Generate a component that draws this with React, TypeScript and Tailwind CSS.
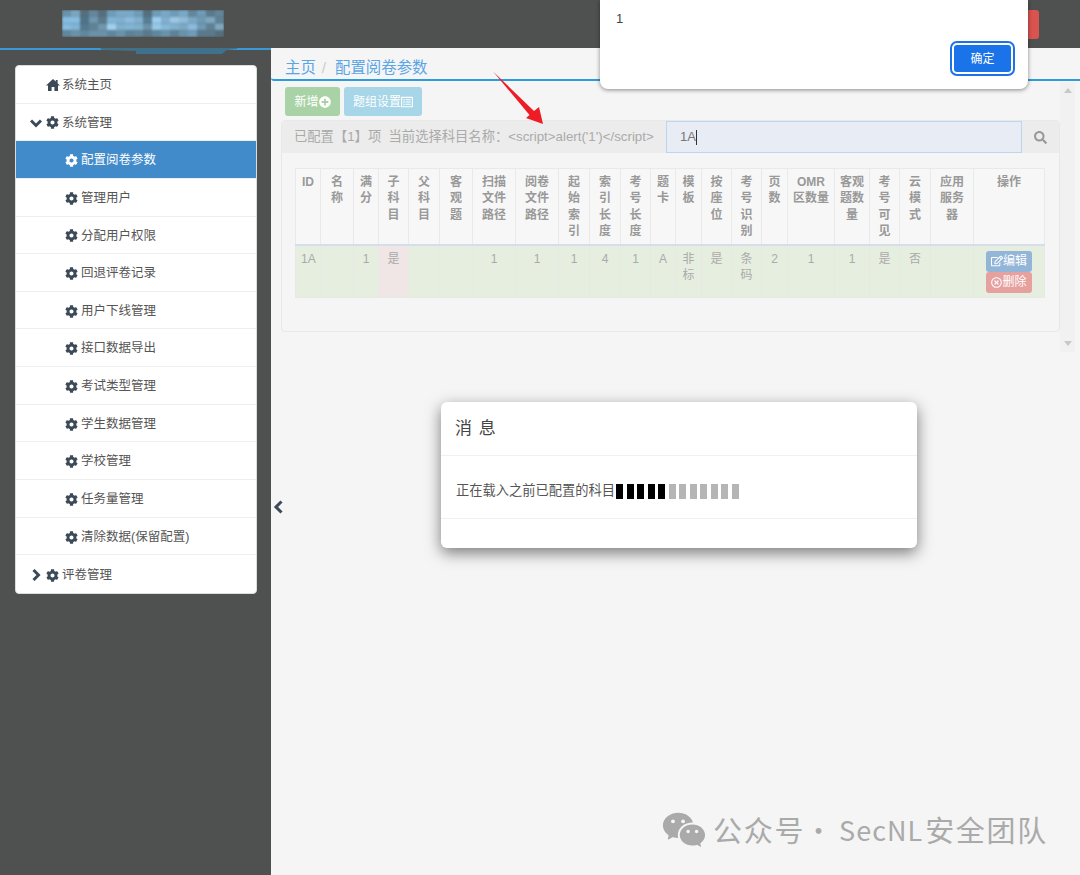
import React from "react";
import { FaCog, FaPlusCircle, FaRegListAlt, FaRegEdit, FaRegTimesCircle, FaSearch } from "react-icons/fa";
import { RiWechatFill } from "react-icons/ri";

const font = { fontFamily: '"Liberation Sans","Noto Sans CJK SC",sans-serif' };
const subItems = ["配置阅卷参数", "管理用户", "分配用户权限", "回退评卷记录", "用户下线管理", "接口数据导出", "考试类型管理", "学生数据管理", "学校管理", "任务量管理", "清除数据(保留配置)"];
const widths = [25, 33, 25, 30, 31, 33, 43, 43, 31, 31, 30, 25, 26, 30, 30, 26, 47, 35, 30, 31, 43, 71];
const heads = ["ID", "名称", "满分", "子科目", "父科目", "客观题", "扫描文件路径", "阅卷文件路径", "起始索引", "索引长度", "考号长度", "题卡", "模板", "按座位", "考号识别", "页数", "OMR区数量", "客观题数量", "考号可见", "云模式", "应用服务器", "操作"];
const cells = ["1A", "", "1", "是", "", "", "1", "1", "1", "4", "1", "A", "非标", "是", "条码", "2", "1", "1", "是", "否", "", ""];
const logo = [
  ["#6a93ab", "#7aa6c2", "#566f7f", "#62879c", "#566f7f", "#6f9cb8", "#7aa9c8", "#7aa9c8", "#6f9cb8", "#566f7f", "#6f9cb8", "#7aa9c8", "#6f9cb8", "#7aa9c8", "#62879c", "#6f9cb8", "#5a7a8c", "#62879c"],
  ["#85bce0", "#86bde0", "#4f7488", "#6f97ae", "#5a7a8c", "#80b5d5", "#7fb0cf", "#8abade", "#80b0cf", "#567e94", "#9ccdee", "#7fb0d0", "#9cc6e4", "#8fbcdb", "#7ca8c4", "#6e9ab4", "#7fa8c0", "#5f8296"],
  ["#85bce0", "#7fb4d6", "#527a90", "#5f8296", "#6f97ae", "#a0d0ef", "#7fb0cf", "#80b5d5", "#7fb0cf", "#6a93ab", "#96c8ea", "#86b8d8", "#7fb0d0", "#7ca8c4", "#8abade", "#6e9ab4", "#5f8296", "#7fa8c0"],
  ["#62879c", "#6a93ab", "#62879c", "#6a93ab", "#6a93ab", "#62879c", "#6a93ab", "#5f8296", "#62879c", "#5a7a8c", "#62879c", "#6a93ab", "#5f8296", "#6a93ab", "#6f9cb8", "#5a7a8c", "#5a7a8c", "#566f7f"],
];

function Home() {
  return (
    <svg className="ml-[16px] mr-[2px] shrink-0" width="14" height="12" viewBox="0 0 14 12">
      <path d="M7 0 L0 6.5 H2 V12 H5.6 V8 H8.4 V12 H12 V6.5 H14 L11.6 4.3 V1 H9.8 V2.6 Z" fill="#3c4a58" />
    </svg>
  );
}
function Chevron({ d, className }: { d: string; className: string }) {
  return (
    <svg className={`shrink-0 ${className}`} width="12" height="12" viewBox="0 0 12 12" fill="none" stroke="#3c4a58" strokeWidth="3">
      <path d={d} />
    </svg>
  );
}

function Menu({ children, sub, active, last }: { children: React.ReactNode; sub?: boolean; active?: boolean; last?: boolean }) {
  return (
    <div className={`flex h-[37.65px] items-center pt-[2px] text-[12.5px] ${sub ? "pl-[49px]" : "pl-[14px]"} ${active ? "bg-[#428bca] text-white" : "text-[#555]"} ${last ? "" : "border-b border-[#eeeeee]"}`}>
      {children}
    </div>
  );
}

export default function App() {
  return (
    <div style={font} className="relative flex h-[875px] w-[1080px] flex-col overflow-hidden bg-[#f5f5f5]">
      <header className="relative flex h-[48px] shrink-0 items-start bg-[#4f5150]">
        <svg className="ml-[62px] mt-[10px]" width="162" height="27" viewBox="0 0 162 27">
          <g style={{ filter: "blur(1.2px)" }}>
            {logo.flatMap((row, y) => row.map((c, x) => <rect key={`${x}-${y}`} x={x * 9} y={y * 6.75} width="9" height="6.75" fill={c} />))}
          </g>
        </svg>
        <div className="absolute right-[41px] top-[10px] h-[29px] w-[12px] rounded-r-[3px] bg-[#d9534f]" />
      </header>
      <div className="flex min-h-0 flex-1">
        <aside className="relative flex w-[271px] shrink-0 flex-col bg-[#4f5150]">
          <div className="h-[2px] shrink-0 bg-[#3a9ad9]" />
          <svg className="absolute left-[100px] top-0" width="138" height="7" viewBox="0 0 138 7">
            <path d="M0 0H137V1L127 2L122 6H36V3L2 2Z" fill="#41708a" />
          </svg>
          <nav className="ml-[15px] mt-[15px] w-[241.5px] overflow-hidden rounded-[4px] border border-[#dddddd] bg-white">
            <Menu><Home />系统主页</Menu>
            <Menu><Chevron d="M1 3.5 L6 8.5 L11 3.5" className="mr-[4px]" /><FaCog className="mr-[3px] text-[13px] text-[#3c4a58]" />系统管理</Menu>
            {subItems.map((t, i) => (
              <Menu key={t} sub active={i === 0}><FaCog className={`mr-[3px] text-[13px] ${i === 0 ? "text-white" : "text-[#3c4a58]"}`} />{t}</Menu>
            ))}
            <Menu last><Chevron d="M3.5 1 L8.5 6 L3.5 11" className="mr-[4px]" /><FaCog className="mr-[3px] text-[13px] text-[#3c4a58]" />评卷管理</Menu>
          </nav>
        </aside>
        <main className="min-w-0 flex-1">
          <div className="flex h-[33px] items-end gap-[6px] rounded-bl-[3px] border-b-2 border-[#2e9cdb] pl-[14px] text-[15.4px] text-[#5aa5e6]">
            <span>主页</span><span className="text-[#cccccc]">/</span><span className="ml-[3px]">配置阅卷参数</span>
          </div>
          <div className="flex gap-[4px] pl-[14px] pt-[6px]">
            <div className="flex h-[29px] w-[55px] items-center justify-center rounded-[3px] bg-[#a9d3a6] text-[12px] text-white">新增<FaPlusCircle className="text-[12px]" /></div>
            <div className="flex h-[29px] w-[78px] items-center justify-center rounded-[3px] bg-[#a7d6e8] text-[12px] text-white">题组设置<FaRegListAlt className="text-[12px]" /></div>
          </div>
          <div className="flex">
            <section className="ml-[10px] mt-[4px] h-[212px] w-[779px] shrink-0 rounded-[4px] border border-[#e8e8e8]">
              <div className="flex h-[32px] items-center rounded-t-[4px] bg-[#ececec] text-[13.3px] text-[#aaaaaa]">
                <span className="w-[384px] shrink-0 whitespace-pre pl-[12px]">已配置【1】项  当前选择科目名称：&lt;script&gt;alert('1')&lt;/script&gt;</span>
                <div className="flex h-[32px] w-[356px] shrink-0 items-center border border-[#bcd6ee] bg-[#e8edf5] pl-[13px] text-[13px] text-[#777777]">1A<span className="h-[15px] w-px bg-[#333333]" /></div>
                <FaSearch className="ml-[12px] text-[13px] text-[#999999]" />
              </div>
              <table className="ml-[13px] mt-[15px] w-[749px] table-fixed border-collapse text-center text-[12px] leading-[16.3px]">
                <colgroup>{widths.map((w, i) => <col key={i} style={{ width: w }} />)}</colgroup>
                <thead>
                  <tr className="h-[76px]">
                    {heads.map((h, i) => <th key={i} className="border border-b-2 border-[#e9e9e9] border-b-[#d5deea] bg-[#f7f7f7] px-[5px] pt-[5px] align-top font-bold text-[#999999]">{h}</th>)}
                  </tr>
                </thead>
                <tbody>
                  <tr className="h-[53px]">
                    {cells.map((c, i) => (
                      <td key={i} className={`border border-[#e6e9e4] px-[5px] pt-[5px] align-top text-[#aaaaaa] ${i === 3 ? "bg-[#f0e6e6]" : "bg-[#e6eee0]"}`}>
                        {i === 21 ? (
                          <div className="flex flex-col items-center">
                            <div className="flex h-[21px] w-[46px] items-center justify-center rounded-[3px] bg-[#93b5d8] text-white"><FaRegEdit className="text-[12px]" />编辑</div>
                            <div className="flex h-[21px] w-[46px] items-center justify-center rounded-[3px] bg-[#e6a09e] text-white"><FaRegTimesCircle className="text-[11px]" />删除</div>
                          </div>
                        ) : c}
                      </td>
                    ))}
                  </tr>
                </tbody>
              </table>
            </section>
          </div>
        </main>
      </div>

      {/* scrollbar strip */}
      <div className="absolute left-[1060px] top-[82px] flex h-[270px] w-[15px] flex-col items-center justify-between bg-[#f1f1f1] py-[6px]">
        <div className="h-0 w-0 border-x-[4px] border-b-[5px] border-x-transparent border-b-[#c8c8c8]" />
        <div className="h-0 w-0 border-x-[4px] border-t-[5px] border-x-transparent border-t-[#c8c8c8]" />
      </div>

      <svg className="absolute left-[272px] top-[500px]" width="12" height="14" viewBox="0 0 12 14" fill="none" stroke="#3c4a58" strokeWidth="3">
        <path d="M9.5 1.5 L4 7 L9.5 12.5" />
      </svg>

      {/* browser alert */}
      <div className="absolute left-[600px] top-0 h-[89px] w-[428px] rounded-b-[8px] bg-white shadow-[0_1px_4px_rgba(0,0,0,0.45)]">
        <div className="pl-[16px] pt-[9px] text-[13px] text-[#444444]">1</div>
        <div className="absolute left-[352px] top-[43px] flex h-[31px] w-[61px] items-center justify-center rounded-[5px] border-2 border-white bg-[#1a73e8] text-[12px] text-white outline-2 outline-[#1a73e8]">确定</div>
      </div>

      {/* red arrow */}
      <svg className="absolute left-[490px] top-[70px]" width="56" height="56" viewBox="0 0 56 56">
        <path d="M3.3 1.7 L44 41 L49 37 L53 54 L36 48 L39.5 45 Z" fill="#ee1c25" />
      </svg>

      {/* message modal */}
      <div className="absolute left-[441px] top-[402px] h-[146px] w-[476px] rounded-[6px] bg-white shadow-[0_5px_15px_rgba(0,0,0,0.5)]">
        <div className="flex h-[54px] items-center border-b border-[#f0f0f0] pl-[14px] text-[17px] tracking-[1px] text-[#444444]">消 息</div>
        <div className="flex h-[63px] items-center border-b border-[#f0f0f0] pl-[15px] pt-[8px] text-[13.25px] text-[#555555]">
          正在载入之前已配置的科目
          <div className="ml-[1px] flex gap-[3.5px]">
            {Array.from({ length: 12 }, (_, i) => <span key={i} className={`h-[15px] w-[7px] ${i < 5 ? "bg-black" : "bg-[#b5b5b5]"}`} />)}
          </div>
        </div>
      </div>

      {/* watermark */}
      <div className="absolute left-[661px] top-[807px] flex items-center text-[29px] tracking-[1.7px] text-[#aaaaaa]" style={{ fontFamily: '"Noto Sans CJK SC",sans-serif' }}>
        <RiWechatFill className="text-[46px]" />
        <span className="ml-[6px]">公众号</span>
        <span className="text-[27px] tracking-[1px]">·</span>
        <span className="ml-[6px] text-[27px] tracking-[1px]">SecNL</span>
        <span className="ml-[2px]">安全团队</span>
      </div>
    </div>
  );
}
